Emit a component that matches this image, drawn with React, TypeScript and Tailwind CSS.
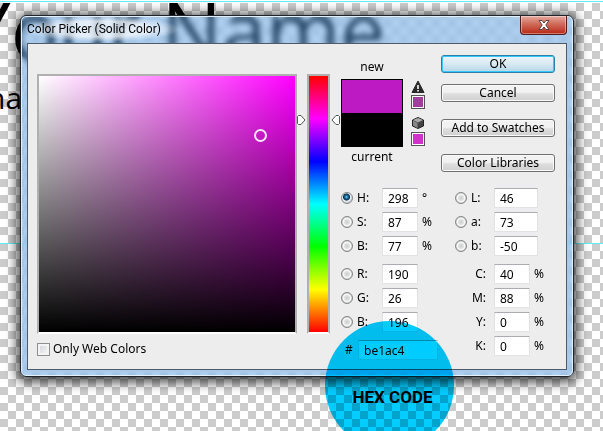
import React from "react";

const control = "border-[#e3e3e3] border-t-[#abadb3] border bg-white h-5 text-[12px] leading-[18px] pl-[5px] rounded-[1px] outline-none";

function Radio({ id, label, on = false }: { id: string; label: string; on?: boolean }) {
  return (
    <input
      type="radio"
      name="channel"
      id={id + "-mode"}
      aria-label={label + " mode"}
      defaultChecked={on}
      className="h-3 w-3 shrink-0 appearance-none rounded-full border border-[#858686] bg-[radial-gradient(circle,#cfd1d2_0,#dedede_35%,#fafafa_50%,#d0d0d0_70%)] checked:bg-[radial-gradient(circle_at_45%_40%,#7fd0f0_0,#176a9b_20%,#0c3350_38%,#f4f4f4_50%,#b8c4cc_75%)]"
    />
  );
}

type FieldProps = { id: string; label: string; value: string; unit?: string; on?: boolean };

function LeftField({ id, label, value, unit, on }: FieldProps) {
  return (
    <div className="flex h-5 items-center">
      <Radio id={id} label={label} on={on} />
      <label htmlFor={id} className="ml-1 w-[25px]">{label}</label>
      <input id={id} defaultValue={value} className={control + " w-9"} />
      <span className="ml-1">{unit}</span>
    </div>
  );
}

function LabField({ id, label, value }: FieldProps) {
  return (
    <div className="flex h-5 items-center">
      <Radio id={id} label={label} />
      <label htmlFor={id} className="ml-1 w-[23px]">{label}</label>
      <input id={id} defaultValue={value} className={control + " w-11"} />
    </div>
  );
}

function InkField({ id, label, value }: FieldProps) {
  return (
    <div className="flex h-5 items-center">
      <label htmlFor={id} className="w-[35px] pr-1 text-right">{label}</label>
      <input id={id} defaultValue={value} className={control + " ml-1 w-9"} />
      <span className="ml-1">%</span>
    </div>
  );
}

function PushButton({ children, primary = false }: { children: React.ReactNode; primary?: boolean }) {
  return (
    <button
      type="button"
      className={
        "block h-[18px] w-full rounded-[3px] border text-[12px] leading-4 " +
        (primary
          ? "border-[#2c80a8] bg-linear-to-b from-[#eef6fa] via-[#d8e9f2] to-[#b4d6e8] shadow-[inset_0_0_0_1px_#35c8f8]"
          : "border-[#707070] bg-linear-to-b from-[#f2f2f2] from-45% via-[#dedede] via-55% to-[#d0d0d0] shadow-[inset_0_0_0_1px_#fafafa]")
      }
    >
      {children}
    </button>
  );
}

function Slider({ flip = false }: { flip?: boolean }) {
  return (
    <svg viewBox="0 0 9 10" className={"mt-[41px] h-[10px] w-[9px] shrink-0 " + (flip ? "-scale-x-100" : "")}>
      <path d="M1.5 .5H4L8 5L4 9.5H1.5L.5 8.5V1.5Z" fill="#fff" stroke="#555" />
    </svg>
  );
}

export default function App() {
  return (
    <main className="relative min-h-screen overflow-hidden bg-white bg-[conic-gradient(#fff_25%,#ccc_0_50%,#fff_0_75%,#ccc_0)] bg-[length:16px_16px] bg-[position:0_3px] pt-[15px] pr-[29px] pb-14 pl-5 font-['Noto_Sans','Open_Sans',sans-serif] text-[12px] text-black">
      <div className="absolute -top-[11px] -left-[34px] font-['Open_Sans',sans-serif] text-[80px] leading-[80px] font-medium whitespace-nowrap">Your Name</div>
      <div className="absolute top-[80px] -left-[13px] font-['Open_Sans',sans-serif] text-[30px] leading-9">na</div>
      <div className="absolute top-0 left-0 h-[3px] w-full bg-white" />
      <div className="absolute top-[1px] left-0 h-px w-full bg-[#5cf0f6]" />
      <div className="absolute top-[243px] left-0 h-px w-full bg-[#5cf0f6]" />

      <section
        role="dialog"
        aria-label="Color Picker"
        className="relative rounded-[6px] border border-[#20252b] bg-[#4da0f2]/40 p-[6px] pt-0 shadow-[0_2px_12px_3px_rgba(0,0,0,0.75),inset_0_0_0_1px_#e4f0fb] backdrop-blur-[3px]"
      >
        <header className="flex h-[27px] items-start justify-between">
          <h1 className="-ml-[5px] rounded-full bg-[radial-gradient(closest-side,#ffffffb0_60%,#ffffff00)] py-[4px] pr-5 pl-[5px] font-['Roboto',sans-serif] text-[12px] leading-[18px]">Color Picker (Solid Color)</h1>
          <button
            type="button"
            aria-label="Close"
            className="flex h-[19px] w-[47px] items-center justify-center rounded-b-[4px] border border-t-0 border-[#501b1b] bg-linear-to-b from-[#e5aa9f] via-[#cf6a58] via-45% to-[#b8200d] shadow-[inset_0_0_0_1px_#ffffff66]"
          >
            <svg viewBox="0 0 12 10" className="h-[10px] w-3">
              <path d="M1 .5H4L6 3L8 .5H11L7.8 5L11 9.5H8L6 7L4 9.5H1L4.2 5Z" fill="#fff" stroke="#5d4444" />
            </svg>
          </button>
        </header>

        <div className="flex h-[327px] border border-[#4d5b69] bg-[#ededed] pt-[30px] pr-[11px] pl-[9px]">
          <div className="min-w-0 flex-1">
            <div className="relative h-[260px] border-2 border-[#b0b0b0] border-b-white bg-[linear-gradient(to_top,#000,transparent),linear-gradient(to_right,#fff,#f0f)]">
              <div className="absolute top-[53px] left-[84%] h-[13px] w-[13px] rounded-full border-2 border-white/90" />
            </div>
            <div className="mt-[7px] flex items-center">
              <input id="web" type="checkbox" className="h-[13px] w-[13px] appearance-none border border-[#8e8f8f] bg-linear-to-br from-[#cdd1d6] to-[#fafafa] shadow-[inset_0_0_0_2px_#f4f4f4]" />
              <label htmlFor="web" className="ml-[3px] leading-4">Only Web Colors</label>
            </div>
          </div>

          <div className="flex">
            <Slider />
            <div className="mx-[1px] h-[260px] w-[23px] border-2 border-[#b0b0b0] border-b-white bg-[linear-gradient(to_bottom,#f00,#f0f_16.67%,#00f_33.33%,#0ff_50%,#0f0_66.67%,#ff0_83.33%,#f00)]" />
            <Slider flip />
          </div>

          <div className="-mt-[15px] ml-px w-[214px] shrink-0">
            <div className="flex justify-between">
              <div className="flex gap-2">
                <div className="w-[62px] text-center leading-4">
                  <div className="mb-1">new</div>
                  <div className="h-[68px] border border-black bg-black"><div className="h-[33px] bg-[#be1ac4]" /></div>
                  <div className="mt-[2px]">current</div>
                </div>
                <div className="flex flex-col items-center pt-[22px]">
                  <svg viewBox="0 0 14 12" className="h-3 w-[14px]">
                    <path d="M7 0L13 11.5H1Z" fill="#292929" stroke="#292929" strokeLinejoin="round" />
                    <path d="M7 4V8M7 9V10.5" stroke="#fff" strokeWidth="1.6" />
                  </svg>
                  <button type="button" aria-label="Use nearest printable color" className="mt-[2px] h-[14px] w-[14px] border border-[#555] bg-[#a33d9b] shadow-[inset_0_0_0_1px_#fff]" />
                  <svg viewBox="0 0 12 12" className="mt-2 h-3 w-3">
                    <path d="M6 .5L11.5 3V9L6 11.5L.5 9V3Z" fill="#444" stroke="#222" />
                    <path d="M6 1L11 3L6 5.5L1 3Z" fill="#aaa" />
                    <path d="M1 3.5L5.5 6V11L1 8.5Z" fill="#888" />
                  </svg>
                  <button type="button" aria-label="Use nearest web color" className="mt-[3px] h-[14px] w-[14px] border border-[#555] bg-[#cc33cc] shadow-[inset_0_0_0_1px_#fff]" />
                </div>
              </div>
              <div className="-mt-1 w-[114px]">
                <PushButton primary>OK</PushButton>
                <div className="mt-[11px] space-y-[17px]">
                  <PushButton>Cancel</PushButton>
                  <PushButton>Add to Swatches</PushButton>
                  <PushButton>Color Libraries</PushButton>
                </div>
              </div>
            </div>

            <div className="mt-4 flex justify-between">
              <div className="space-y-2">
                <div className="space-y-1">
                  <LeftField id="hue" label="H:" value="298" unit="°" on />
                  <LeftField id="sat" label="S:" value="87" unit="%" />
                  <LeftField id="bri" label="B:" value="77" unit="%" />
                </div>
                <div className="space-y-1">
                  <LeftField id="red" label="R:" value="190" />
                  <LeftField id="green" label="G:" value="26" />
                  <LeftField id="blue" label="B:" value="196" />
                </div>
                <div className="ml-1 flex w-[93px] items-center">
                  <label htmlFor="hex" className="w-[13px] shrink-0">#</label>
                  <input id="hex" defaultValue="be1ac4" className={control + " w-20"} />
                </div>
              </div>
              <div className="w-[100px] space-y-2">
                <div className="space-y-1">
                  <LabField id="lab-l" label="L:" value="46" />
                  <LabField id="lab-a" label="a:" value="73" />
                  <LabField id="lab-b" label="b:" value="-50" />
                </div>
                <div className="space-y-1">
                  <InkField id="cyan" label="C:" value="40" />
                  <InkField id="magenta" label="M:" value="88" />
                  <InkField id="yellow" label="Y:" value="0" />
                  <InkField id="key" label="K:" value="0" />
                </div>
              </div>
            </div>
          </div>
        </div>
      </section>

      <div className="pointer-events-none absolute top-[321px] right-[149px] flex h-[129px] w-[129px] justify-center rounded-full bg-[#00ccff] pt-[64px] pl-[6px] font-['Roboto',sans-serif] text-[17px] leading-6 font-bold whitespace-nowrap mix-blend-multiply">
        HEX CODE
      </div>
    </main>
  );
}
